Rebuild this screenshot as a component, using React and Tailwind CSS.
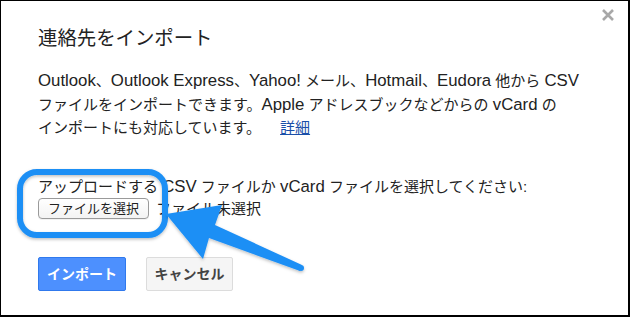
import React from 'react';

const FONT = { fontFamily: '"Liberation Sans", Arial, "Noto Sans CJK JP", sans-serif' };

// latin words are a touch wider than the kana in the original
function L({ children }) {
  return <span className="text-[16.8px]">{children}</span>;
}

function CloseIcon() {
  return (
    <svg width="14" height="14" viewBox="0 0 14 14">
      <path d="M2 2 L12 12 M12 2 L2 12" stroke="#a8a8a8" strokeWidth="2.6" strokeLinecap="butt" />
    </svg>
  );
}

// Skitch-like annotation: rounded highlight + arrow
function Annotation() {
  return (
    <svg className="absolute inset-0 pointer-events-none" width="630" height="317" viewBox="0 0 630 317">
      <defs>
        <filter id="sh" x="-20%" y="-20%" width="140%" height="140%">
          <feDropShadow dx="0" dy="1.5" stdDeviation="1.5" floodColor="#000" floodOpacity="0.25" />
        </filter>
      </defs>
      <rect x="19" y="171" width="145" height="63" rx="17" fill="none" stroke="#1e8ff5" strokeWidth="6" filter="url(#sh)" />
      <g filter="url(#sh)" fill="#1e8ff5">
        <polygon points="165,213 221,204 214,224 301,264 299,270 208,237 202,258" />
        <circle cx="300" cy="267" r="3" />
      </g>
    </svg>
  );
}

export default function App() {
  return (
    <div className="relative w-[630px] h-[317px] bg-white border-t border-l border-r-2 border-b-2 border-black overflow-hidden" style={FONT}>
      <button className="absolute top-[7px] right-[13px] p-0">
        <CloseIcon />
      </button>

      <div className="pl-[37px] pt-[22px] pr-[20px] text-[#222]">
        <h1 className="text-[19.4px] leading-[30px] font-normal">連絡先をインポート</h1>

        <p className="mt-[16px] text-[15px] leading-[23.5px] whitespace-nowrap">
          <L>Outlook</L>、<L>Outlook Express</L>、<L>Yahoo!</L> メール、<L>Hotmail</L>、<L>Eudora</L> 他から <L>CSV</L><br />
          ファイルをインポートできます。<L>Apple</L> アドレスブックなどからの <L>vCard</L> の<br />
          インポートにも対応しています。
          <a className="ml-[19px] text-[#1a4fa8] underline">詳細</a>
        </p>

        <div className="mt-[36px] text-[15px] leading-[22px] whitespace-nowrap">
          アップロードする <L>CSV</L> ファイルか <L>vCard</L> ファイルを選択してください:
        </div>
        <div className="flex items-center gap-[7px] text-[15px]">
          <span className="h-[21px] px-[9px] flex items-center rounded-[4px] border border-[#9a9a9a] bg-gradient-to-b from-white to-[#f3f3f3] text-[13px] text-[#222] shadow-[0_1px_0_rgba(0,0,0,0.05)]">
            ファイルを選択
          </span>
          <span>ファイル未選択</span>
        </div>

        <div className="mt-[37px] flex gap-[20px]">
          <button className="w-[88px] h-[34px] rounded-[2px] border border-[#3079ed] bg-[#4d90fe] text-white text-[14px] font-bold">
            インポート
          </button>
          <button className="w-[87px] h-[34px] rounded-[2px] border border-[#dcdcdc] bg-[#f5f5f5] text-[#444] text-[14px] font-bold">
            キャンセル
          </button>
        </div>
      </div>

      <Annotation />
    </div>
  );
}
